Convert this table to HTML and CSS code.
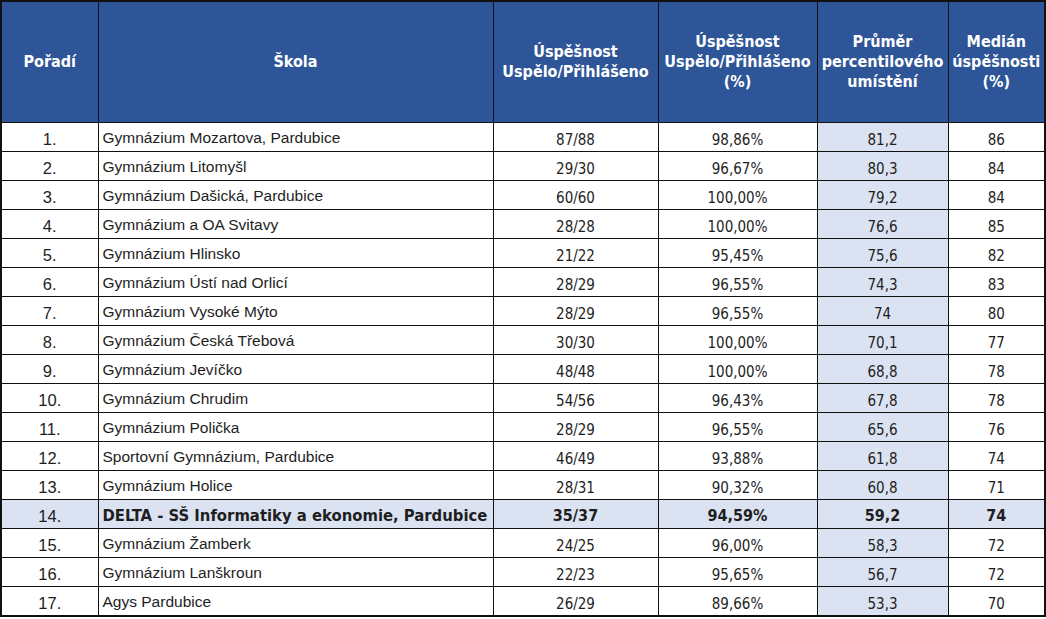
FILE: index.html
```html
<!DOCTYPE html>
<html lang="cs">
<head>
<meta charset="utf-8">
<title>Pořadí škol</title>
<link rel="stylesheet" href="styles.css">
</head>
<body>
<table class="rank">
  <colgroup>
    <col class="c-rank"><col class="c-school"><col class="c-ratio"><col class="c-pct"><col class="c-avg"><col class="c-med">
  </colgroup>
  <thead>
    <tr>
      <th>Pořadí</th>
      <th>Škola</th>
      <th>Úspěšnost<br>Uspělo/Přihlášeno</th>
      <th>Úspěšnost<br>Uspělo/Přihlášeno<br>(%)</th>
      <th>Průměr<br>percentilového<br>umístění</th>
      <th>Medián<br>úspěšnosti<br>(%)</th>
    </tr>
  </thead>
  <tbody>
    <tr><td class="r">1.</td><td class="s">Gymnázium Mozartova, Pardubice</td><td class="n">87/88</td><td class="n">98,86%</td><td class="n a">81,2</td><td class="n">86</td></tr>
    <tr><td class="r">2.</td><td class="s">Gymnázium Litomyšl</td><td class="n">29/30</td><td class="n">96,67%</td><td class="n a">80,3</td><td class="n">84</td></tr>
    <tr><td class="r">3.</td><td class="s">Gymnázium Dašická, Pardubice</td><td class="n">60/60</td><td class="n">100,00%</td><td class="n a">79,2</td><td class="n">84</td></tr>
    <tr><td class="r">4.</td><td class="s">Gymnázium a OA Svitavy</td><td class="n">28/28</td><td class="n">100,00%</td><td class="n a">76,6</td><td class="n">85</td></tr>
    <tr><td class="r">5.</td><td class="s">Gymnázium Hlinsko</td><td class="n">21/22</td><td class="n">95,45%</td><td class="n a">75,6</td><td class="n">82</td></tr>
    <tr><td class="r">6.</td><td class="s">Gymnázium Ústí nad Orlicí</td><td class="n">28/29</td><td class="n">96,55%</td><td class="n a">74,3</td><td class="n">83</td></tr>
    <tr><td class="r">7.</td><td class="s">Gymnázium Vysoké Mýto</td><td class="n">28/29</td><td class="n">96,55%</td><td class="n a">74</td><td class="n">80</td></tr>
    <tr><td class="r">8.</td><td class="s">Gymnázium Česká Třebová</td><td class="n">30/30</td><td class="n">100,00%</td><td class="n a">70,1</td><td class="n">77</td></tr>
    <tr><td class="r">9.</td><td class="s">Gymnázium Jevíčko</td><td class="n">48/48</td><td class="n">100,00%</td><td class="n a">68,8</td><td class="n">78</td></tr>
    <tr><td class="r">10.</td><td class="s">Gymnázium Chrudim</td><td class="n">54/56</td><td class="n">96,43%</td><td class="n a">67,8</td><td class="n">78</td></tr>
    <tr><td class="r">11.</td><td class="s">Gymnázium Polička</td><td class="n">28/29</td><td class="n">96,55%</td><td class="n a">65,6</td><td class="n">76</td></tr>
    <tr><td class="r">12.</td><td class="s">Sportovní Gymnázium, Pardubice</td><td class="n">46/49</td><td class="n">93,88%</td><td class="n a">61,8</td><td class="n">74</td></tr>
    <tr><td class="r">13.</td><td class="s">Gymnázium Holice</td><td class="n">28/31</td><td class="n">90,32%</td><td class="n a">60,8</td><td class="n">71</td></tr>
    <tr class="hl"><td class="r">14.</td><td class="s">DELTA - SŠ Informatiky a ekonomie, Pardubice</td><td class="n">35/37</td><td class="n">94,59%</td><td class="n a">59,2</td><td class="n">74</td></tr>
    <tr><td class="r">15.</td><td class="s">Gymnázium Žamberk</td><td class="n">24/25</td><td class="n">96,00%</td><td class="n a">58,3</td><td class="n">72</td></tr>
    <tr><td class="r">16.</td><td class="s">Gymnázium Lanškroun</td><td class="n">22/23</td><td class="n">95,65%</td><td class="n a">56,7</td><td class="n">72</td></tr>
    <tr><td class="r">17.</td><td class="s">Agys Pardubice</td><td class="n">26/29</td><td class="n">89,66%</td><td class="n a">53,3</td><td class="n">70</td></tr>
  </tbody>
</table>
</body>
</html>
```

FILE: styles.css
```css
html, body {
  margin: 0;
  padding: 0;
  background: #ffffff;
}

.rank {
  border-collapse: collapse;
  table-layout: fixed;
  width: 1045px;
  border: 2px solid #111;
  color: #1e1e1e;
}

.c-rank { width: 97px; }
.c-school { width: 395px; }
.c-ratio { width: 165px; }
.c-pct { width: 159px; }
.c-avg { width: 131px; }
.c-med { width: 97px; }

.rank th {
  background: #2e5597;
  color: #ffffff;
  font-family: "DejaVu Sans Condensed", "DejaVu Sans", sans-serif;
  font-weight: bold;
  font-size: 16px;
  line-height: 20px;
  height: 120px;
  padding: 0;
  text-align: center;
  vertical-align: middle;
  border: 1px solid #111;
}

.rank td {
  border: 1px solid #111;
  line-height: 20px;
  vertical-align: top;
  white-space: nowrap;
  overflow: hidden;
}

.rank td.r {
  font-family: "Liberation Sans", Arial, sans-serif;
  font-size: 16.5px;
  text-align: center;
  padding: 6px 0 2px 0;
  height: 20px;
}

.rank td.s {
  font-family: "Liberation Sans", Arial, sans-serif;
  font-size: 15.5px;
  text-align: left;
  padding: 5px 0 3px 4px;
  height: 20px;
}

.rank td.n {
  font-family: "DejaVu Sans Condensed", "DejaVu Sans", sans-serif;
  font-size: 15px;
  text-align: center;
  padding: 7px 0 1px 0;
  height: 20px;
}

.rank td.a {
  background: #dbe2f2;
}

.rank tr.hl td {
  background: #dbe2f2;
}

.rank tr.hl td.s {
  font-family: "DejaVu Sans Condensed", "DejaVu Sans", sans-serif;
  font-weight: bold;
  font-size: 16.5px;
  padding-top: 6px;
  padding-bottom: 2px;
}

.rank tr.hl td.n {
  font-weight: bold;
  font-size: 16px;
  padding-top: 6px;
  padding-bottom: 2px;
}
```
